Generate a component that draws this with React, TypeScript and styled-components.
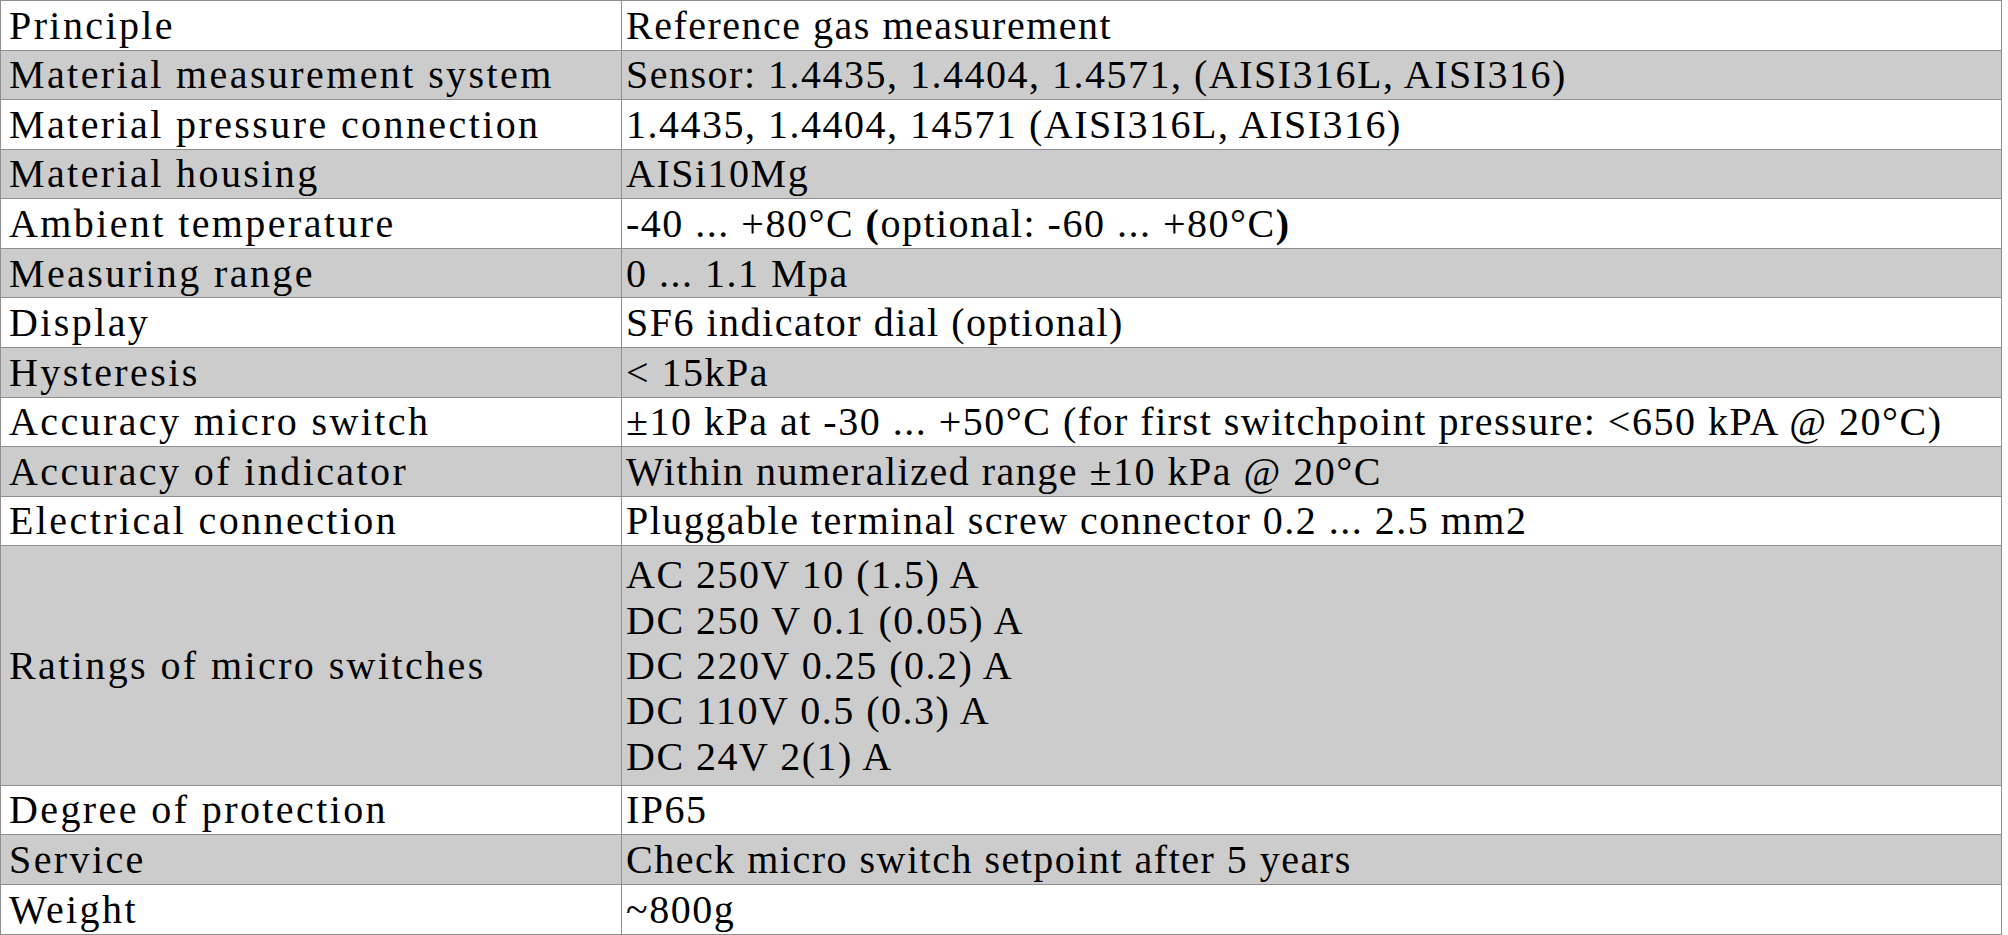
import React from 'react'
import styled, { createGlobalStyle } from 'styled-components'

const GlobalStyle = createGlobalStyle`
  html, body {
    margin: 0;
    padding: 0;
    background: #ffffff;
  }
`

const SpecTable = styled.table`
  width: 2002px;
  border-collapse: collapse;
  font-family: 'Liberation Serif', 'Times New Roman', serif;
  font-size: 40px;
  line-height: 45.3px;
  color: #000000;
`

const Row = styled.tr<{ $shaded: boolean }>`
  background: ${p => (p.$shaded ? '#cccccc' : '#ffffff')};
`

const LabelCell = styled.td`
  width: 612px;
  padding: 1.65px 0 1.65px 8px;
  border: 1px solid #8f8f8f;
  vertical-align: middle;
  white-space: nowrap;
  letter-spacing: 2.4px;
`

const ValueCell = styled.td<{ $tall?: boolean }>`
  padding: ${p => (p.$tall ? '6px' : '1.65px')} 4px ${p => (p.$tall ? '6px' : '1.65px')} 4px;
  border: 1px solid #8f8f8f;
  vertical-align: middle;
  white-space: nowrap;
  letter-spacing: 1.5px;
`

const Line = styled.div`
  display: block;
`

const Paren = styled.b`
  font-weight: 700;
`

type Spec = { label: string; value: React.ReactNode; tall?: boolean }

const specs: Spec[] = [
  { label: 'Principle', value: 'Reference gas measurement' },
  { label: 'Material measurement system', value: 'Sensor: 1.4435, 1.4404, 1.4571, (AISI316L, AISI316)' },
  { label: 'Material pressure connection', value: '1.4435, 1.4404, 14571 (AISI316L, AISI316)' },
  { label: 'Material housing', value: 'AISi10Mg' },
  {
    label: 'Ambient temperature',
    value: (
      <>
        {'-40 ... +80°C '}
        <Paren>(</Paren>
        {'optional: -60 ... +80°C'}
        <Paren>)</Paren>
      </>
    ),
  },
  { label: 'Measuring range', value: '0 ... 1.1 Mpa' },
  { label: 'Display', value: 'SF6 indicator dial (optional)' },
  { label: 'Hysteresis', value: '< 15kPa' },
  {
    label: 'Accuracy micro switch',
    value: '±10 kPa at -30 ... +50°C (for first switchpoint pressure: <650 kPA @ 20°C)',
  },
  { label: 'Accuracy of indicator', value: 'Within numeralized range ±10 kPa @ 20°C' },
  { label: 'Electrical connection', value: 'Pluggable terminal screw connector 0.2 ... 2.5 mm2' },
  {
    label: 'Ratings of micro switches',
    tall: true,
    value: (
      <>
        <Line>AC 250V 10 (1.5) A</Line>
        <Line>DC 250 V 0.1 (0.05) A</Line>
        <Line>DC 220V 0.25 (0.2) A</Line>
        <Line>DC 110V 0.5 (0.3) A</Line>
        <Line>DC 24V 2(1) A</Line>
      </>
    ),
  },
  { label: 'Degree of protection', value: 'IP65' },
  { label: 'Service', value: 'Check micro switch setpoint after 5 years' },
  { label: 'Weight', value: '~800g' },
]

const App = () => {
  return (
    <>
      <GlobalStyle />
      <SpecTable>
        <tbody>
          {specs.map((spec, i) => (
            <Row key={spec.label} $shaded={i % 2 === 1}>
              <LabelCell>{spec.label}</LabelCell>
              <ValueCell $tall={spec.tall}>{spec.value}</ValueCell>
            </Row>
          ))}
        </tbody>
      </SpecTable>
    </>
  )
}

export default App
